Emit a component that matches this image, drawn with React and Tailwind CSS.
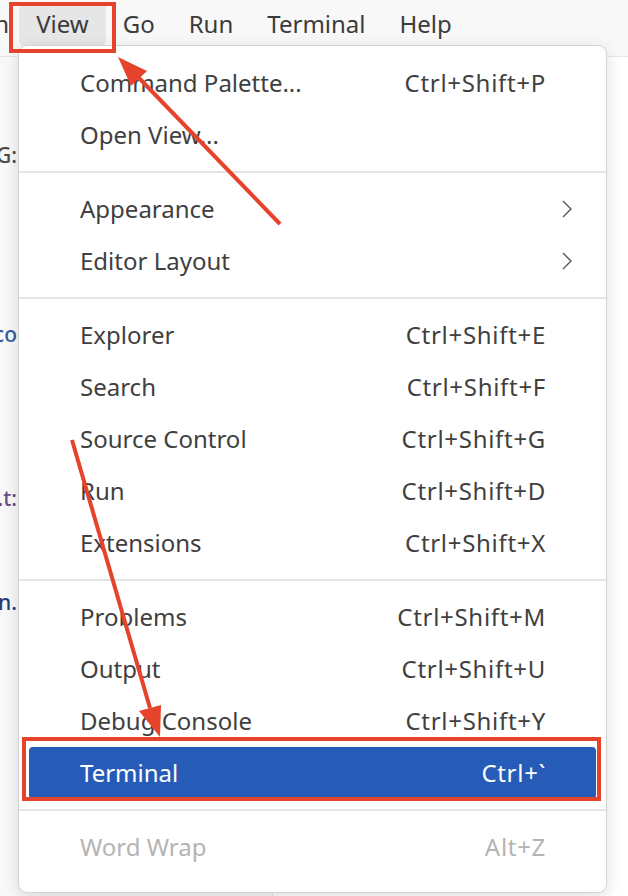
import React from "react";

const sections = [
  [
    { label: "Command Palette...", keys: "Ctrl+Shift+P" },
    { label: "Open View...", keys: "" },
  ],
  [
    { label: "Appearance", sub: true },
    { label: "Editor Layout", sub: true },
  ],
  [
    { label: "Explorer", keys: "Ctrl+Shift+E" },
    { label: "Search", keys: "Ctrl+Shift+F" },
    { label: "Source Control", keys: "Ctrl+Shift+G" },
    { label: "Run", keys: "Ctrl+Shift+D" },
    { label: "Extensions", keys: "Ctrl+Shift+X" },
  ],
  [
    { label: "Problems", keys: "Ctrl+Shift+M" },
    { label: "Output", keys: "Ctrl+Shift+U" },
    { label: "Debug Console", keys: "Ctrl+Shift+Y" },
    { label: "Terminal", keys: "Ctrl+`", active: true },
  ],
  [{ label: "Word Wrap", keys: "Alt+Z", disabled: true }],
];

const Chevron = () => (
  <svg width="14" height="22" viewBox="0 0 14 22" fill="none">
    <polyline
      points="3,3 11,11 3,19"
      stroke="#555"
      strokeWidth="1.4"
      strokeLinejoin="round"
    />
  </svg>
);

const MenuRow = ({ item }) => {
  const color = item.active
    ? "bg-[#265cb7] text-white rounded-[4px]"
    : item.disabled
    ? "text-[#b4b4b4]"
    : "text-[#404040]";
  return (
    <div
      className={`mx-[10px] h-[52px] flex items-center justify-between pl-[51px] pr-[50px] ${color}`}
    >
      <span>{item.label}</span>
      {item.sub ? (
        <span className="-mr-[28px]">
          <Chevron />
        </span>
      ) : (
        <span className="tracking-[0.7px]">{item.keys}</span>
      )}
    </div>
  );
};

export default function App() {
  const topMenu = ["View", "Go", "Run", "Terminal", "Help"];

  return (
    <div className="relative w-[628px] h-[896px] overflow-hidden bg-white font-['Segoe_UI','Noto_Sans',sans-serif] text-[24px]">
      {/* menubar */}
      <div className="h-[57px] bg-[#f8f8f8] border-b border-[#e6e6e6] flex items-start pt-[2px] text-[#3b3b3b]">
        <span className="-ml-[99px] h-[44px] flex items-center pl-[6px] pr-[10px]">
          Selection
        </span>
        {topMenu.map((m, i) => (
          <div
            key={m}
            className={`h-[44px] flex items-center px-[17px] rounded-[6px] ${
              i === 0 ? "bg-[#e6e6e6]" : ""
            }`}
          >
            {m}
          </div>
        ))}
      </div>

      {/* body */}
      <div className="flex h-[839px]">
        <div className="w-[273px] bg-[#f8f8f8] border-r border-[#e2e2e2] overflow-hidden">
          <div className="w-[17px] flex flex-col items-end text-[21px] font-medium">
            <span className="mt-[83px] text-[#4a4a4a]">G:</span>
            <span className="mt-[147px] text-[#2f5d9a]">co</span>
            <span className="mt-[133px] text-[#6b4a86]">.t:</span>
            <span className="mt-[72px] text-[#1f3f7a]">n.</span>
          </div>
        </div>
        <div className="flex-1 bg-white" />
      </div>

      {/* view menu dropdown */}
      <div className="absolute left-[18px] top-[45px] w-[589px] bg-white rounded-[9px] border border-[#d4d4d4] shadow-[0_4px_16px_rgba(0,0,0,0.13)] pt-[11px] pb-[19px]">
        {sections.map((sec, si) => (
          <div key={si}>
            {si > 0 && <div className="h-[2px] bg-[#e4e4e4] my-[10px]" />}
            {sec.map((item) => (
              <MenuRow key={item.label} item={item} />
            ))}
          </div>
        ))}
      </div>

      {/* annotation boxes */}
      <div className="absolute left-[9px] top-[2px] w-[107px] h-[51px] border-[4px] border-[#e5432b]" />
      <div className="absolute left-[22px] top-[737px] w-[579px] h-[64px] border-[4px] border-[#e5432b]" />

      {/* annotation arrows */}
      <svg
        className="absolute inset-0 pointer-events-none"
        width="628"
        height="896"
        viewBox="0 0 628 896"
      >
        <line x1="280" y1="224" x2="139" y2="78" stroke="#e5432b" strokeWidth="4" />
        <polygon points="118,57 147,71 131,86" fill="#e5432b" />
        <line x1="72" y1="440" x2="150" y2="708" stroke="#e5432b" strokeWidth="4" />
        <polygon points="160,737 161,705 139,711" fill="#e5432b" />
      </svg>
    </div>
  );
}
